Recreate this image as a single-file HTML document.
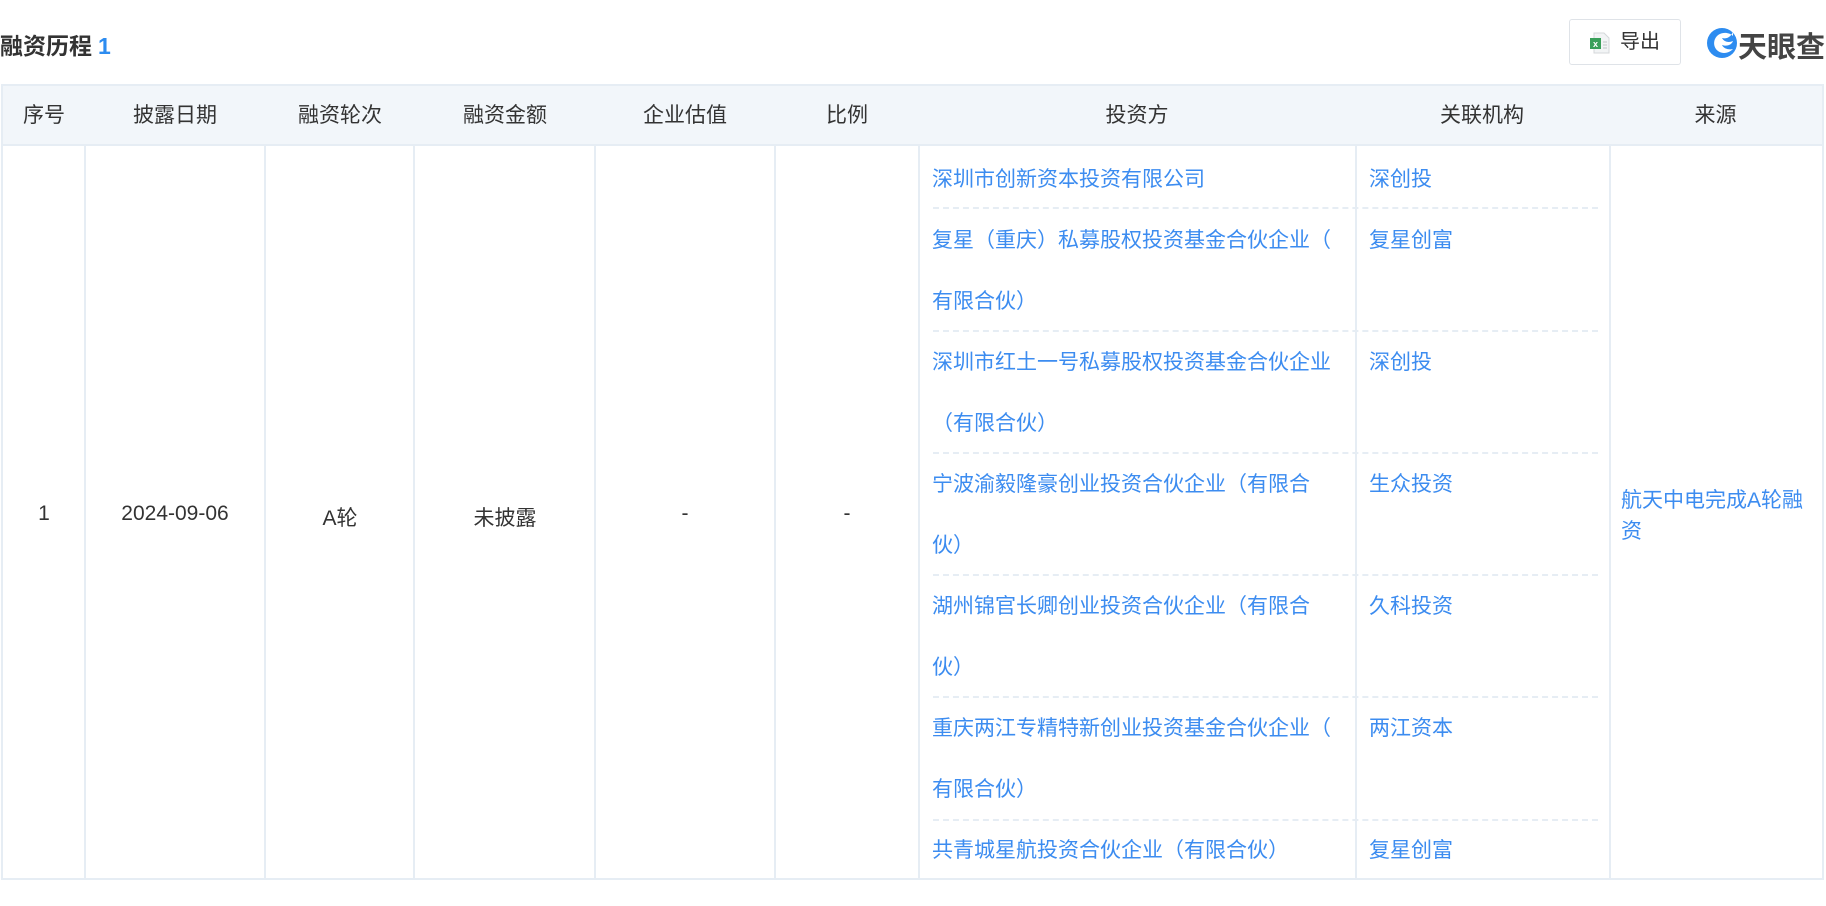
<!DOCTYPE html>
<html><head><meta charset="utf-8"><style>
*{margin:0;padding:0;box-sizing:border-box}
body{width:1826px;height:906px;background:#fff;font-family:"Liberation Sans","Noto Sans CJK SC",sans-serif;color:#333;position:relative;overflow:hidden}
.a{position:absolute}
.title{left:0px;top:27px;font-size:23px;font-weight:bold;color:#333}
.title span{color:#2d8cf0;margin-left:6px}
.btn{left:1569px;top:19px;width:112px;height:46px;border:1px solid #dfe3e8;border-radius:3px;font-size:20px;color:#333;line-height:44px;padding-left:50px}
.logo{top:24px;font-size:29px;font-weight:bold;color:#444}
.tbl{left:1px;top:84px;width:1823px;height:796px;border:2px solid #e6edf4}
.hd{left:0;top:0;width:1819px;height:60px;background:#f2f6fa;border-bottom:2px solid #e6edf4}
.vl{top:60px;width:2px;height:732px;background:#e6edf4}
.h{top:0;height:60px;line-height:60px;font-size:21px;text-align:center;color:#333}
.c{font-size:21px;text-align:center;color:#333}
.blue{color:#3c8cf0;font-size:21px}
.dash{height:0;border-top:2px dashed #e6edf4}
</style></head><body>
<div class="a title">融资历程<span>1</span></div>
<div class="a btn">导出
<svg class="a" style="left:19px;top:12px" width="22" height="22" viewBox="0 0 22 22"><path d="M5 1h10l5 5v15H5z" fill="#f2f4f5" stroke="#d4d7da"/><rect x="1" y="6" width="11" height="11" fill="#3aa05a"/><text x="6.5" y="15" font-size="9" fill="#fff" text-anchor="middle" font-family="Liberation Sans" font-weight="bold">x</text><path d="M14 10h4M14 13h4M14 16h4" stroke="#c0c4c8"/></svg>
</div>
<svg class="a" style="left:1706px;top:27px" width="32" height="32" viewBox="0 0 32 32"><circle cx="16" cy="16" r="15" fill="#2d8cf0"/><path d="M27 9C22 4 12 5 9 12c-3 7 2 14 9 14 4 0 7-2 9-4-4 1-9 0-11-4 6 2 10-1 11-4-4 2-9 1-11-3 4 1 8 0 11-6z" fill="#fff"/></svg>
<div class="a logo" style="left:1738px">天眼查</div>
<div class="a tbl">
<div class="a hd"></div>
<div class="a h" style="left:0;width:82px">序号</div>
<div class="a h" style="left:82px;width:180px">披露日期</div>
<div class="a h" style="left:262px;width:150px">融资轮次</div>
<div class="a h" style="left:412px;width:180px">融资金额</div>
<div class="a h" style="left:592px;width:180px">企业估值</div>
<div class="a h" style="left:772px;width:144px">比例</div>
<div class="a h" style="left:916px;width:436px">投资方</div>
<div class="a h" style="left:1352px;width:254px">关联机构</div>
<div class="a h" style="left:1606px;width:213px">来源</div>
<div class="a vl" style="left:81px"></div>
<div class="a vl" style="left:261px"></div>
<div class="a vl" style="left:410px"></div>
<div class="a vl" style="left:591px"></div>
<div class="a vl" style="left:771px"></div>
<div class="a vl" style="left:915px"></div>
<div class="a vl" style="left:1352px"></div>
<div class="a vl" style="left:1606px"></div>
<div class="a c" style="left:0;width:82px;top:416px">1</div>
<div class="a c" style="left:82px;width:180px;top:416px">2024-09-06</div>
<div class="a c" style="left:262px;width:150px;top:416px">A轮</div>
<div class="a c" style="left:412px;width:180px;top:416px">未披露</div>
<div class="a c" style="left:592px;width:180px;top:416px">-</div>
<div class="a c" style="left:772px;width:144px;top:416px">-</div>
<div class="a blue" style="left:1618px;top:399px;line-height:31px">航天中电完成A轮融<br>资</div>
<div class="a blue" style="left:929px;top:63px;line-height:61px;width:430px">
<div style="height:61px">深圳市创新资本投资有限公司</div>
<div style="height:122px">复星（重庆）私募股权投资基金合伙企业（<br>有限合伙）</div>
<div style="height:122px">深圳市红土一号私募股权投资基金合伙企业<br>（有限合伙）</div>
<div style="height:122px">宁波渝毅隆豪创业投资合伙企业（有限合<br>伙）</div>
<div style="height:122px">湖州锦官长卿创业投资合伙企业（有限合<br>伙）</div>
<div style="height:122px">重庆两江专精特新创业投资基金合伙企业（<br>有限合伙）</div>
<div style="height:61px">共青城星航投资合伙企业（有限合伙）</div>
</div>
<div class="a blue" style="left:1366px;top:63px;line-height:61px">
<div style="height:61px">深创投</div>
<div style="height:122px">复星创富</div>
<div style="height:122px">深创投</div>
<div style="height:122px">生众投资</div>
<div style="height:122px">久科投资</div>
<div style="height:122px">两江资本</div>
<div style="height:61px">复星创富</div>
</div>
<div class="a dash" style="left:930px;width:665px;top:121px"></div>
<div class="a dash" style="left:930px;width:665px;top:244px"></div>
<div class="a dash" style="left:930px;width:665px;top:366px"></div>
<div class="a dash" style="left:930px;width:665px;top:488px"></div>
<div class="a dash" style="left:930px;width:665px;top:610px"></div>
<div class="a dash" style="left:930px;width:665px;top:733px"></div>
</div>
</body></html>
